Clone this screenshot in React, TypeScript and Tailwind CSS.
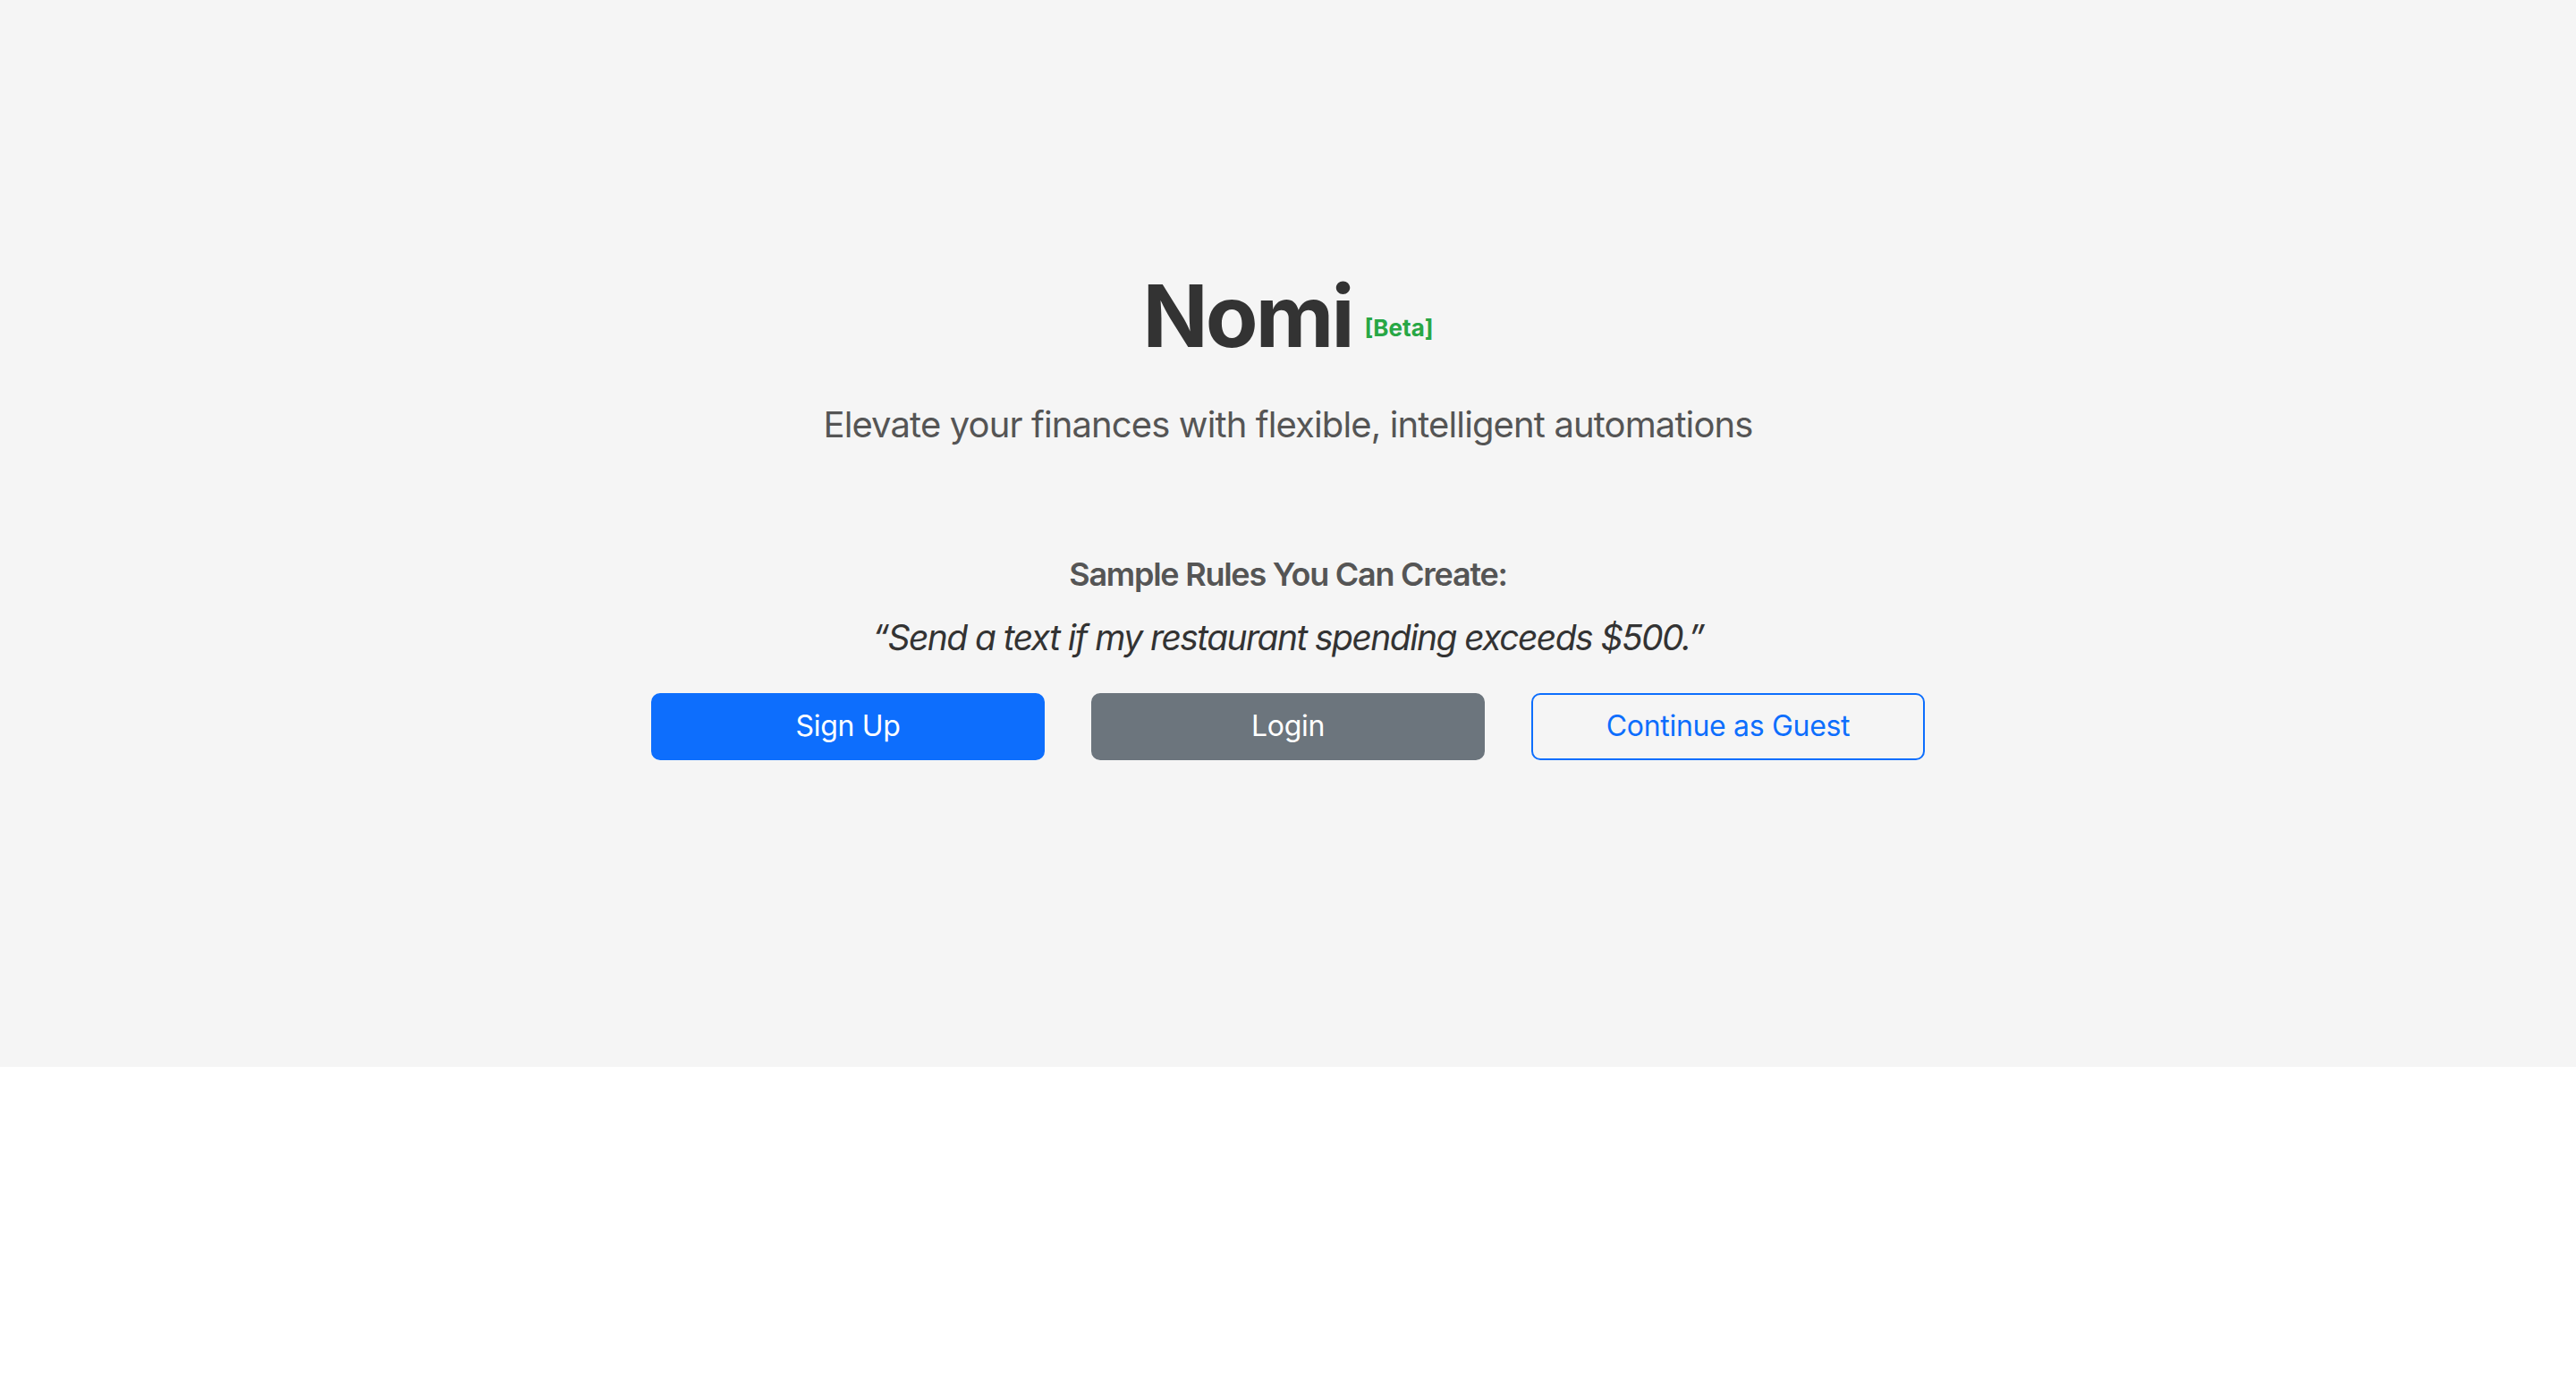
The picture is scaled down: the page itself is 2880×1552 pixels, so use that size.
const buttons = [
  { label: "Sign Up", cls: "bg-[#0d6efd] text-white border-[#0d6efd]" },
  { label: "Login", cls: "bg-[#6c757d] text-white border-[#6c757d]" },
  { label: "Continue as Guest", cls: "bg-transparent text-[#0d6efd] border-[#0d6efd]" },
];

export default function App() {
  return (
    <div className="min-h-screen bg-white font-['Inter','Noto_Sans',sans-serif]">
      <section className="h-[1193px] bg-[#f5f5f5] flex flex-col items-center pt-[296px]">
        <h1 className="text-[96px] leading-[1.2] font-bold text-[#333] tracking-[-0.03em]">
          Nomi
          <span className="ml-[14px] text-[26px] font-bold text-[#28a745] tracking-normal align-[12px]">
            [Beta]
          </span>
        </h1>
        <p className="mt-[34px] text-[40px] leading-[1.5] text-[#555] tracking-[-0.022em]">
          Elevate your finances with flexible, intelligent automations
        </p>
        <h3 className="mt-[110px] text-[36px] leading-[1.5] font-semibold text-[#555] tracking-[-0.035em]">
          Sample Rules You Can Create:
        </h3>
        <p className="mt-[15px] text-[39px] leading-[1.5] italic text-[#333] tracking-[-0.04em]">
          “Send a text if my restaurant spending exceeds $500.”
        </p>
        <div className="mt-[32px] flex gap-[52px]">
          {buttons.map((b) => (
            <button
              key={b.label}
              type="button"
              className={`w-[440px] h-[75px] rounded-[10px] border-2 text-[32px] leading-[48px] tracking-[-0.01em] ${b.cls}`}
            >
              {b.label}
            </button>
          ))}
        </div>
      </section>
    </div>
  );
}
